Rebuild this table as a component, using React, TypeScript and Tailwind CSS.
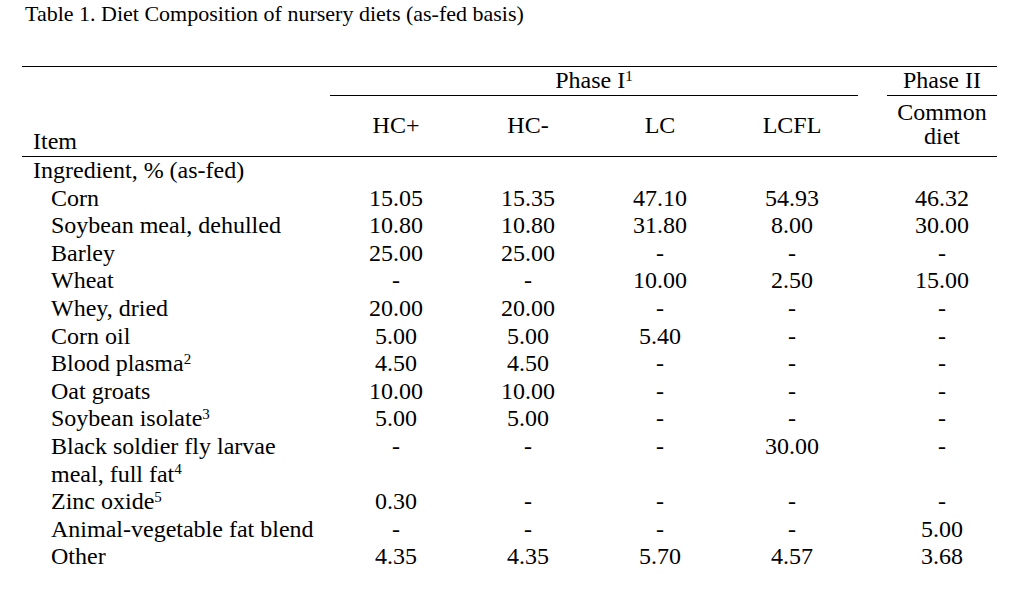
import React from 'react';

type Row = {
  label: React.ReactNode;
  values: string[];
};

const rows: Row[] = [
  { label: 'Ingredient, % (as-fed)', values: [] },
  { label: 'Corn', values: ['15.05', '15.35', '47.10', '54.93', '46.32'] },
  { label: 'Soybean meal, dehulled', values: ['10.80', '10.80', '31.80', '8.00', '30.00'] },
  { label: 'Barley', values: ['25.00', '25.00', '-', '-', '-'] },
  { label: 'Wheat', values: ['-', '-', '10.00', '2.50', '15.00'] },
  { label: 'Whey, dried', values: ['20.00', '20.00', '-', '-', '-'] },
  { label: 'Corn oil', values: ['5.00', '5.00', '5.40', '-', '-'] },
  { label: <>Blood plasma<sup className="text-[15px]">2</sup></>, values: ['4.50', '4.50', '-', '-', '-'] },
  { label: 'Oat groats', values: ['10.00', '10.00', '-', '-', '-'] },
  { label: <>Soybean isolate<sup className="text-[15px]">3</sup></>, values: ['5.00', '5.00', '-', '-', '-'] },
  {
    label: <>Black soldier fly larvae<br />meal, full fat<sup className="text-[15px]">4</sup></>,
    values: ['-', '-', '-', '30.00', '-'],
  },
  { label: <>Zinc oxide<sup className="text-[15px]">5</sup></>, values: ['0.30', '-', '-', '-', '-'] },
  { label: 'Animal-vegetable fat blend', values: ['-', '-', '-', '-', '5.00'] },
  { label: 'Other', values: ['4.35', '4.35', '5.70', '4.57', '3.68'] },
];

const diets = ['HC+', 'HC-', 'LC', 'LCFL'];

const App = () => {
  return (
    <div className="min-h-screen bg-white text-black font-['Liberation_Serif',serif]">
      <div className="pl-[22px] pt-[2px]">
        <p className="ml-[3px] text-[22px] leading-[24px]">
          Table 1. Diet Composition of nursery diets (as-fed basis)
        </p>

        <div className="mt-[40px] w-[975px] text-[24px] leading-[27.6px]">
          {/* header */}
          <div className="grid grid-cols-[308px_132px_132px_132px_132px_29px_110px] border-t border-b border-black">
            <div className="row-span-2 flex items-end pl-[11px]">Item</div>
            <div className="col-span-4 h-[29px] border-b border-black text-center">
              Phase I<sup className="text-[15px]">1</sup>
            </div>
            <div />
            <div className="h-[29px] border-b border-black text-center">Phase II</div>
            {diets.map((d) => (
              <div key={d} className="h-[60px] flex items-center justify-center">
                {d}
              </div>
            ))}
            <div />
            <div className="h-[60px] pt-[4px] text-center leading-[24px]">
              Common
              <br />
              diet
            </div>
          </div>

          {/* body */}
          {rows.map((row, i) => (
            <div key={i} className="grid grid-cols-[308px_132px_132px_132px_132px_29px_110px]">
              <div className={i === 0 ? 'pl-[11px] whitespace-nowrap' : 'pl-[29px] whitespace-nowrap'}>
                {row.label}
              </div>
              {row.values.slice(0, 4).map((v, j) => (
                <div key={j} className="text-center">
                  {v}
                </div>
              ))}
              {row.values.length > 0 && <div className="col-start-7 text-center">{row.values[4]}</div>}
            </div>
          ))}
        </div>
      </div>
    </div>
  );
};

export default App;
